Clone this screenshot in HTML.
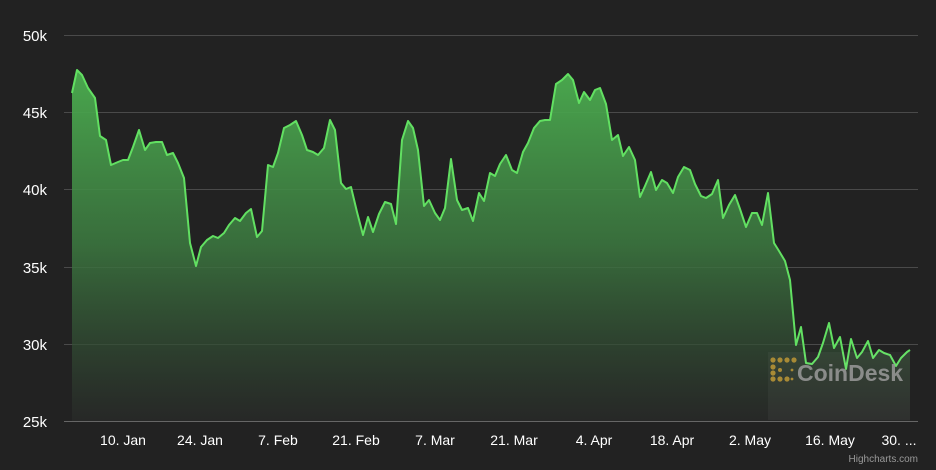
<!DOCTYPE html>
<html><head><style>
html,body{margin:0;padding:0;background:#222222;width:936px;height:470px;overflow:hidden}
</style></head><body>
<svg width="936" height="470" xmlns="http://www.w3.org/2000/svg" style="font-family:'Liberation Sans',sans-serif">
<defs>
<linearGradient id="f" x1="0" y1="70" x2="0" y2="421" gradientUnits="userSpaceOnUse">
<stop offset="0" stop-color="#4caf50" stop-opacity="0.95"/>
<stop offset="0.5" stop-color="#3c7a40" stop-opacity="0.85"/>
<stop offset="1" stop-color="#2a2c2a" stop-opacity="0.6"/>
</linearGradient>
</defs>
<rect width="936" height="470" fill="#222222"/>
<g stroke="#4a4a4a" stroke-width="1">
<line x1="64" y1="35.5" x2="918" y2="35.5"/>
<line x1="64" y1="112.5" x2="918" y2="112.5"/>
<line x1="64" y1="189.5" x2="918" y2="189.5"/>
<line x1="64" y1="267.5" x2="918" y2="267.5"/>
<line x1="64" y1="344.5" x2="918" y2="344.5"/>
</g>
<line x1="64" y1="421.5" x2="918" y2="421.5" stroke="#666" stroke-width="1"/>
<g fill="#ffffff" font-size="15" text-anchor="end">
<text x="47" y="41">50k</text>
<text x="47" y="118">45k</text>
<text x="47" y="195">40k</text>
<text x="47" y="273">35k</text>
<text x="47" y="350">30k</text>
<text x="47" y="427">25k</text>
</g>
<g fill="#ffffff" font-size="14" text-anchor="middle">
<text x="123" y="445">10. Jan</text>
<text x="200" y="445">24. Jan</text>
<text x="278" y="445">7. Feb</text>
<text x="356" y="445">21. Feb</text>
<text x="435" y="445">7. Mar</text>
<text x="514" y="445">21. Mar</text>
<text x="594" y="445">4. Apr</text>
<text x="672" y="445">18. Apr</text>
<text x="750" y="445">2. May</text>
<text x="830" y="445">16. May</text>
<text x="899" y="445">30. ...</text>
</g>
<text x="918" y="462" fill="#999" font-size="10" text-anchor="end">Highcharts.com</text>
<path id="p" d="M72,93 L77,70 82,75 88,88 95,98 100,136 106,140 111,165 118,162 123,160 128,160 133,147 139,130 145,150 150,143 156,142 162,142 167,155 173,153 178,163 184,178 190,243 196,266 201,247 207,240 213,236 218,238 224,233 229,225 235,218 240,221 246,213 251,209 257,237 262,231 268,165 273,167 278,153 284,128 290,125 296,121 302,135 307,150 313,152 318,155 324,148 330,120 335,130 341,183 346,189 351,187 357,212 363,235 368,217 373,232 379,214 385,202 391,204 396,224 402,140 408,121 413,128 418,150 424,206 429,200 435,213 440,220 445,208 451,159 457,200 462,210 468,208 473,221 479,193 484,201 490,173 495,176 500,164 506,155 512,170 517,173 523,152 528,143 534,128 540,121 545,120 550,120 556,84 562,80 568,74 573,80 579,103 584,92 590,100 595,90 600,88 606,104 612,140 618,135 623,156 629,147 635,160 640,197 645,186 651,172 656,190 662,180 667,183 673,193 678,177 684,167 690,170 695,184 701,196 706,198 712,194 718,180 723,218 729,205 735,195 740,209 746,227 752,213 757,213 762,225 768,193 774,243 779,251 785,261 790,280 796,345 801,327 806,363 812,364 818,357 823,343 829,323 834,348 840,337 846,369 851,339 857,358 862,352 868,341 873,358 879,350 884,353 890,355 896,366 901,358 907,352 910,350" fill="none"/>
<path d="M72,93 L77,70 82,75 88,88 95,98 100,136 106,140 111,165 118,162 123,160 128,160 133,147 139,130 145,150 150,143 156,142 162,142 167,155 173,153 178,163 184,178 190,243 196,266 201,247 207,240 213,236 218,238 224,233 229,225 235,218 240,221 246,213 251,209 257,237 262,231 268,165 273,167 278,153 284,128 290,125 296,121 302,135 307,150 313,152 318,155 324,148 330,120 335,130 341,183 346,189 351,187 357,212 363,235 368,217 373,232 379,214 385,202 391,204 396,224 402,140 408,121 413,128 418,150 424,206 429,200 435,213 440,220 445,208 451,159 457,200 462,210 468,208 473,221 479,193 484,201 490,173 495,176 500,164 506,155 512,170 517,173 523,152 528,143 534,128 540,121 545,120 550,120 556,84 562,80 568,74 573,80 579,103 584,92 590,100 595,90 600,88 606,104 612,140 618,135 623,156 629,147 635,160 640,197 645,186 651,172 656,190 662,180 667,183 673,193 678,177 684,167 690,170 695,184 701,196 706,198 712,194 718,180 723,218 729,205 735,195 740,209 746,227 752,213 757,213 762,225 768,193 774,243 779,251 785,261 790,280 796,345 801,327 806,363 812,364 818,357 823,343 829,323 834,348 840,337 846,369 851,339 857,358 862,352 868,341 873,358 879,350 884,353 890,355 896,366 901,358 907,352 910,350 L910,421 L72,421 Z" fill="url(#f)"/>
<use href="#p" stroke="#62e062" stroke-width="2" stroke-linejoin="round"/>
<rect x="768" y="352" width="142" height="68" fill="#ffffff" opacity="0.04"/>
<g fill="#a88a35">
<circle cx="773" cy="360" r="2.6"/><circle cx="780" cy="360" r="2.6"/><circle cx="787" cy="360" r="2.6"/><circle cx="794" cy="360" r="2.6"/>
<circle cx="773" cy="367" r="2.6"/><circle cx="773" cy="373" r="2.6"/>
<circle cx="773" cy="379" r="2.6"/><circle cx="780" cy="379" r="2.6"/><circle cx="787" cy="379" r="2.6"/>
<circle cx="780" cy="370" r="2"/><circle cx="792" cy="370" r="1.4"/><circle cx="792" cy="379" r="1.4"/>
</g>
<text x="797" y="381" fill="#9a9a9a" fill-opacity="0.85" font-size="23" font-weight="bold">CoinDesk</text>
</svg>
</body></html>
